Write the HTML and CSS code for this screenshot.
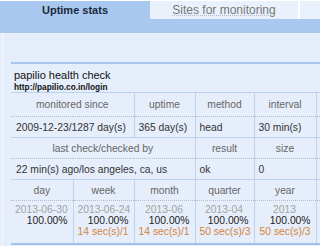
FILE: index.html
```html
<!DOCTYPE html>
<html lang="en">
<head>
    <meta charset="UTF-8">
    <meta name="viewport" content="width=device-width, initial-scale=1.0">
    <title>Uptime stats</title>
    <link rel="stylesheet" href="styles.css">
</head>
<body>
    <div class="tabs">
        <div class="tab active">Uptime stats</div>
        <div class="tab"><span class="tab-link">Sites for monitoring</span></div>
        <div class="tab spare"></div>
    </div>
    <div class="strip"></div>
    <div class="panel">
        <div class="inner">
            <div class="rule"></div>
            <div class="site">
                <div class="site-name">papilio health check</div>
                <div class="site-url">http://papilio.co.in/login</div>
            </div>
            <table class="stats">
                <colgroup>
                    <col class="c1"><col class="c2"><col class="c3"><col class="c4"><col class="c5"><col class="c6">
                </colgroup>
                <tr class="head">
                    <th colspan="2">monitored since</th>
                    <th>uptime</th>
                    <th>method</th>
                    <th>interval</th>
                    <th></th>
                </tr>
                <tr class="data">
                    <td colspan="2">2009-12-23/1287 day(s)</td>
                    <td>365 day(s)</td>
                    <td>head</td>
                    <td>30 min(s)</td>
                    <td></td>
                </tr>
                <tr class="head">
                    <th colspan="3">last check/checked by</th>
                    <th>result</th>
                    <th>size</th>
                    <th></th>
                </tr>
                <tr class="data">
                    <td colspan="3">22 min(s) ago/los angeles, ca, us</td>
                    <td>ok</td>
                    <td>0</td>
                    <td></td>
                </tr>
                <tr class="head">
                    <th>day</th>
                    <th>week</th>
                    <th>month</th>
                    <th>quarter</th>
                    <th>year</th>
                    <th></th>
                </tr>
                <tr class="periods">
                    <td><span class="date">2013-06-30</span><span class="pct">100.00%</span></td>
                    <td><span class="date">2013-06-24</span><span class="pct">100.00%</span><span class="down">14 sec(s)/1</span></td>
                    <td><span class="date">2013-06</span><span class="pct">100.00%</span><span class="down">14 sec(s)/1</span></td>
                    <td><span class="date">2013-04</span><span class="pct">100.00%</span><span class="down">50 sec(s)/3</span></td>
                    <td><span class="date">2013</span><span class="pct">100.00%</span><span class="down">50 sec(s)/3</span></td>
                    <td></td>
                </tr>
            </table>
        </div>
    </div>
</body>
</html>
```

FILE: styles.css
```css
html, body {
    overflow: hidden;
}
body {
    margin: 0;
    background-color: #fff;
    font-family: 'Liberation Sans', Arial, sans-serif;
    color: #333;
}
.tabs {
    display: flex;
    margin-top: 1px;
    height: 18px;
}
.tab {
    flex: none;
    width: 148px;
    line-height: 18px;
    text-align: center;
    font-size: 12px;
    color: #777;
    background-color: #e9f1fc;
}
.tab.active {
    width: 150px;
    font-size: 11px;
    font-weight: bold;
    color: #1c2838;
    background-color: #a9c8ef;
}
.tab.spare {
    width: 20px;
    margin-left: 2px;
}
.tab-link {
    text-decoration: underline dotted #b4bccb;
}
.strip {
    height: 14px;
    background-color: #a9c8ef;
}
.panel {
    background-color: #e6eefb;
    padding-left: 2px;
    height: 214px;
}
.inner {
    border-left: 1px solid #f4f8fe;
    padding: 29px 0 0 8px;
    height: 100%;
    box-sizing: border-box;
}
.rule {
    height: 2px;
    background-color: #a6c6ee;
}
.site {
    padding: 5px 0 0 3px;
}
.site-name {
    font-size: 11px;
    line-height: 13px;
    color: #111;
}
.site-url {
    font-size: 8.3px;
    line-height: 10px;
    font-weight: bold;
    color: #111;
}
.stats {
    width: 309px;
    table-layout: fixed;
    border-collapse: collapse;
    font-size: 10.3px;
    border-top: 1px solid #bcd2ef;
    border-bottom: 2px solid #a0c2ec;
}
.c1 { width: 62px; }
.c2 { width: 61px; }
.c3 { width: 61px; }
.c4 { width: 59px; }
.c5 { width: 62px; }
.c6 { width: 4px; }
.stats th, .stats td {
    padding: 0 4px;
    border-left: 1px solid #bcd2ef;
    white-space: nowrap;
    overflow: hidden;
}
.stats th:first-child, .stats td:first-child {
    border-left: none;
}
.stats th:last-child, .stats td:last-child {
    padding: 0;
}
.stats th {
    font-weight: normal;
    color: #666;
    text-align: center;
    border-bottom: 1px dotted #b8bcc6;
}
.head th {
    height: 20px;
}
.head:first-child th {
    height: 23px;
}
.data td {
    height: 20px;
    text-align: left;
    color: #333;
    border-bottom: 1px solid #bcd2ef;
}
.data td:first-child {
    padding-left: 5px;
}
.periods td {
    vertical-align: top;
    text-align: right;
    padding: 3px 5px 6px 4px;
    line-height: 11px;
    height: 33px;
}
.periods span {
    display: block;
}
.date {
    text-align: center;
    color: #a4a4a4;
}
.pct {
    color: #222;
}
.down {
    color: #d4843a;
}
```
